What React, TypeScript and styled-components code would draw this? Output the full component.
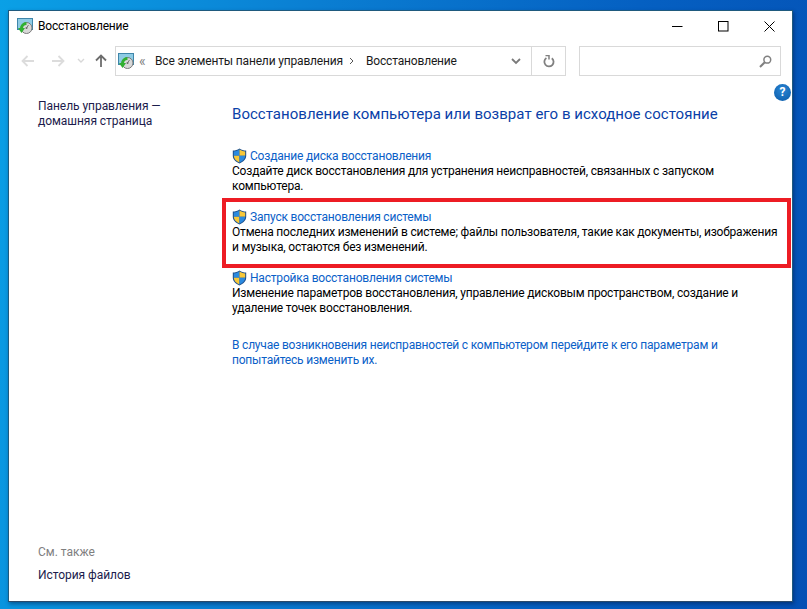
import React from 'react';
import styled, { createGlobalStyle } from 'styled-components';

const GlobalStyle = createGlobalStyle`
  html, body { margin: 0; padding: 0; }
  body { font-family: Roboto, "Noto Sans", sans-serif; font-size: 12px; }
`;

const Desktop = styled.div`
  width: 807px;
  height: 609px;
  box-sizing: border-box;
  padding: 10px 14px 7px 8px;
  background: linear-gradient(100deg, #0aa0e6 0%, #0a7ed2 35%, #0560c2 70%, #0450b4 100%);
  overflow: hidden;
`;

const Window = styled.div`
  height: 100%;
  box-sizing: border-box;
  background: #fff;
  border: 1px solid #1f5a7e;
  border-bottom-color: #2b4a6a;
  display: flex;
  flex-direction: column;
  box-shadow: 1px 2px 4px rgba(0, 20, 60, 0.45);
`;

const TitleBar = styled.div`
  height: 30px;
  display: flex;
  align-items: center;
  padding-left: 8px;
  flex: none;
`;

const TitleText = styled.span`
  margin-left: 5px;
  color: #000;
  line-height: 30px;
  font-size: 12px;
  letter-spacing: -0.2px;
`;

const WindowButtons = styled.div`
  margin-left: auto;
  display: flex;
  height: 30px;
`;

const WindowButton = styled.div`
  width: 46px;
  height: 30px;
  display: flex;
  align-items: center;
  justify-content: center;
`;

const NavRow = styled.div`
  height: 30px;
  margin-top: 5px;
  display: flex;
  align-items: stretch;
  flex: none;
  padding-left: 5px;
`;

const NavButton = styled.div<{ $w: number }>`
  width: ${(p) => p.$w}px;
  display: flex;
  align-items: center;
  justify-content: center;
`;

const AddressBox = styled.div`
  width: 451px;
  box-sizing: border-box;
  margin-left: 1px;
  border: 1px solid #d9d9d9;
  display: flex;
  align-items: center;
  padding-left: 2px;
`;

const Crumbs = styled.span`
  margin-left: 5px;
  color: #808080;
  font-size: 14px;
  width: 16px;
  line-height: 26px;
`;

const Crumb = styled.span`
  color: #1a1a1a;
  margin-right: 6px;
  font-size: 12px;
  letter-spacing: -0.17px;
`;

const CrumbArrow = styled.svg`
  margin-right: 11px;
`;

const AddressEnd = styled.div`
  margin-left: auto;
  display: flex;
  align-items: center;
  height: 100%;
`;

const Refresh = styled.div`
  width: 33px;
  height: 100%;
  border-left: 1px solid #d9d9d9;
  display: flex;
  align-items: center;
  justify-content: center;
`;

const Dropdown = styled.div`
  width: 30px;
  display: flex;
  align-items: center;
  justify-content: center;
`;

const SearchBox = styled.div`
  width: 202px;
  box-sizing: border-box;
  margin-left: 13px;
  border: 1px solid #d9d9d9;
  display: flex;
  align-items: center;
  justify-content: flex-end;
  padding-right: 8px;
`;

const Body = styled.div`
  flex: 1;
  display: flex;
  min-height: 0;
`;

const Sidebar = styled.aside`
  width: 213px;
  flex: none;
  box-sizing: border-box;
  padding: 23px 0 18px 29px;
  display: flex;
  flex-direction: column;
`;

const SideLink = styled.a`
  color: #1c1c4c;
  line-height: 15px;
  font-size: 12px;
  letter-spacing: -0.05px;
`;

const SeeAlso = styled.div`
  margin-top: auto;
  color: #7f7f7f;
  line-height: 15px;
  margin-bottom: 8px;
`;

const Main = styled.main`
  flex: 1;
  position: relative;
  box-sizing: border-box;
  padding: 28px 10px 0 10px;
`;

const HelpIcon = styled.div`
  position: absolute;
  top: 8px;
  right: 1px;
  width: 17px;
  height: 17px;
  border-radius: 50%;
  background: radial-gradient(circle at 50% 35%, #2a86d4, #0a5aa8);
  color: #fff;
  font-weight: 700;
  font-size: 12px;
  line-height: 17px;
  text-align: center;
`;

const Heading = styled.h1`
  margin: 0 0 23px;
  font-weight: 400;
  font-size: 15px;
  line-height: 20px;
  color: #0a3fa8;
  letter-spacing: 0.03px;
`;

const Task = styled.section<{ $marked?: boolean }>`
  position: relative;
  margin-bottom: 14px;
  letter-spacing: -0.2px;

  ${(p) =>
    p.$marked &&
    `&::after {
      content: '';
      position: absolute;
      left: -10px;
      right: -9px;
      top: -10px;
      bottom: -13px;
      border: 4px solid #ed1c24;
      pointer-events: none;
    }`}
`;

const TaskLink = styled.a`
  display: flex;
  align-items: center;
  gap: 3px;
  height: 17px;
  color: #0a60c8;
  font-size: 12px;
  line-height: 16px;
`;

const TaskText = styled.p`
  margin: 0;
  color: #000;
  font-size: 12px;
  line-height: 15px;
`;

const TroubleLink = styled.a`
  display: block;
  margin-top: 22px;
  color: #0a60c8;
  font-size: 12px;
  line-height: 15px;
  letter-spacing: -0.2px;
`;

function Shield() {
  return (
    <svg width="15" height="16" viewBox="0 0 15 16">
      <path d="M7.5.5C5.5 2 3.3 2.6.8 2.6v5.2c0 3.5 2.8 6 6.7 7.7 3.9-1.7 6.7-4.2 6.7-7.7V2.6C11.700 2.6 9.500 2 7.500.5z" fill="#1c4f8c" />
      <path d="M7.5 1.6v6.2H1.8V3.5c2.1-.1 4-.7 5.7-1.9z" fill="#2a8ae0" />
      <path d="M7.5 1.6c1.700 1.2 3.600 1.800 5.700 1.900v4.300H7.500z" fill="#f8c838" />
      <path d="M1.8 7.8h5.700v6.600C4.200 13 1.800 10.800 1.800 7.800z" fill="#f8c838" />
      <path d="M7.500 7.800h5.700c0 3-2.400 5.200-5.700 6.600z" fill="#2a8ae0" />
    </svg>
  );
}

function RecoveryIcon() {
  return (
    <svg width="16" height="16" viewBox="0 0 16 16">
      <rect x="0.5" y="0.5" width="15" height="11" fill="#8ecbe4" stroke="#3f86aa" />
      <circle cx="9.5" cy="10" r="5.500" fill="#d8d8d8" stroke="#7a7a7a" />
      <circle cx="9.500" cy="10" r="1" fill="#666" />
      <path d="M9.500 10l2-3" stroke="#777" />
      <path d="M9.500 5.500A5 5 0 0 0 4.500 10.500" fill="none" stroke="#30b030" strokeWidth="3" />
      <path d="M1 10h7l-3.500 5z" fill="#30b030" />
    </svg>
  );
}

const ArrowSvg = styled.svg<{ $rotate: number }>`
  transform: rotate(${(p) => p.$rotate}deg);
`;

function ArrowIcon({ dir, color }: { dir: 'left' | 'right' | 'up'; color: string }) {
  const rotate = dir === 'left' ? 180 : dir === 'up' ? -90 : 0;
  return (
    <ArrowSvg $rotate={rotate} width="14" height="14" viewBox="0 0 14 14">
      <path d="M1 7h11M7.500 2l5 5-5 5" fill="none" stroke={color} strokeWidth="1.800" />
    </ArrowSvg>
  );
}

export default function App() {
  return (
    <>
      <GlobalStyle />
      <Desktop>
        <Window>
          <TitleBar>
            <RecoveryIcon />
            <TitleText>Восстановление</TitleText>
            <WindowButtons>
              <WindowButton>
                <svg width="11" height="11" viewBox="0 0 11 11">
                  <path d="M0 5.500h10.500" stroke="#000" />
                </svg>
              </WindowButton>
              <WindowButton>
                <svg width="11" height="11" viewBox="0 0 11 11">
                  <rect x="0.500" y="0.500" width="9.500" height="9.500" fill="none" stroke="#000" />
                </svg>
              </WindowButton>
              <WindowButton>
                <svg width="11" height="11" viewBox="0 0 11 11">
                  <path d="M.5.500l10 10M10.500.500l-10 10" stroke="#000" />
                </svg>
              </WindowButton>
            </WindowButtons>
          </TitleBar>
          <NavRow>
            <NavButton $w={28}><ArrowIcon dir="left" color="#dcdcdc" /></NavButton>
            <NavButton $w={32}><ArrowIcon dir="right" color="#dcdcdc" /></NavButton>
            <NavButton $w={14}>
              <svg width="8" height="6" viewBox="0 0 8 6">
                <path d="M1 1l3 3 3-3" fill="none" stroke="#d8d8d8" strokeWidth="1.400" />
              </svg>
            </NavButton>
            <NavButton $w={26}><ArrowIcon dir="up" color="#6d6d6d" /></NavButton>
            <AddressBox>
              <RecoveryIcon />
              <Crumbs>«</Crumbs>
              <Crumb>Все элементы панели управления</Crumb>
              <CrumbArrow width="6" height="8" viewBox="0 0 6 8">
                <path d="M1 1l3 3-3 3" fill="none" stroke="#555" />
              </CrumbArrow>
              <Crumb>Восстановление</Crumb>
              <AddressEnd>
                <Dropdown>
                  <svg width="10" height="7" viewBox="0 0 10 7">
                    <path d="M1 1l4 4 4-4" fill="none" stroke="#7a7a7a" strokeWidth="1.800" />
                  </svg>
                </Dropdown>
                <Refresh>
                  <svg width="12" height="13" viewBox="0 0 12 13">
                    <path d="M8.800 3.200A4.600 4.600 0 1 1 3.400 3" fill="none" stroke="#808080" strokeWidth="1.800" />
                    <path d="M2.500.500h3.500v4" fill="none" stroke="#808080" strokeWidth="1.500" />
                  </svg>
                </Refresh>
              </AddressEnd>
            </AddressBox>
            <SearchBox>
              <svg width="13" height="13" viewBox="0 0 13 13">
                <circle cx="8.300" cy="4.700" r="3.400" fill="none" stroke="#808080" strokeWidth="1.500" />
                <path d="M5.800 7.200L1 12" stroke="#808080" strokeWidth="2" />
              </svg>
            </SearchBox>
          </NavRow>
          <Body>
            <Sidebar>
              <SideLink>Панель управления —</SideLink>
              <SideLink>домашняя страница</SideLink>
              <SeeAlso>См. также</SeeAlso>
              <SideLink>История файлов</SideLink>
            </Sidebar>
            <Main>
              <HelpIcon>?</HelpIcon>
              <Heading>Восстановление компьютера или возврат его в исходное состояние</Heading>
              <Task>
                <TaskLink><Shield />Создание диска восстановления</TaskLink>
                <TaskText>Создайте диск восстановления для устранения неисправностей, связанных с запуском компьютера.</TaskText>
              </Task>
              <Task $marked>
                <TaskLink><Shield />Запуск восстановления системы</TaskLink>
                <TaskText>Отмена последних изменений в системе; файлы пользователя, такие как документы, изображения и музыка, остаются без изменений.</TaskText>
              </Task>
              <Task>
                <TaskLink><Shield />Настройка восстановления системы</TaskLink>
                <TaskText>Изменение параметров восстановления, управление дисковым пространством, создание и удаление точек восстановления.</TaskText>
              </Task>
              <TroubleLink>В случае возникновения неисправностей с компьютером перейдите к его параметрам и попытайтесь изменить их.</TroubleLink>
            </Main>
          </Body>
        </Window>
      </Desktop>
    </>
  );
}
